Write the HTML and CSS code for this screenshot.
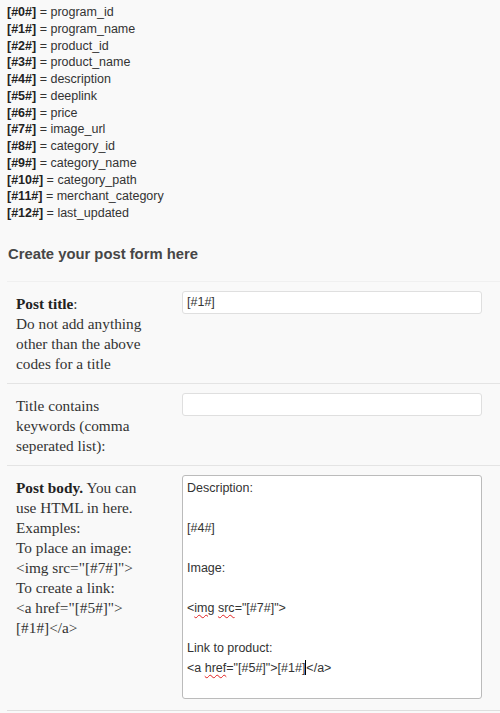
FILE: index.html
```html
<!DOCTYPE html>
<html>
<head>
<meta charset="utf-8">
<link rel="stylesheet" href="styles.css">
</head>
<body>
<div class="codes">
<div><b>[#0#]</b> = program_id</div>
<div><b>[#1#]</b> = program_name</div>
<div><b>[#2#]</b> = product_id</div>
<div><b>[#3#]</b> = product_name</div>
<div><b>[#4#]</b> = description</div>
<div><b>[#5#]</b> = deeplink</div>
<div><b>[#6#]</b> = price</div>
<div><b>[#7#]</b> = image_url</div>
<div><b>[#8#]</b> = category_id</div>
<div><b>[#9#]</b> = category_name</div>
<div><b>[#10#]</b> = category_path</div>
<div><b>[#11#]</b> = merchant_category</div>
<div><b>[#12#]</b> = last_updated</div>
</div>
<h3 class="heading">Create your post form here</h3>
<table class="form-table">
<tr class="row row-first">
<th class="label"><b>Post title</b>:<br>Do not add anything<br>other than the above<br>codes for a title</th>
<td class="field"><input class="text-input" type="text" value="[#1#]"></td>
</tr>
<tr class="row">
<th class="label">Title contains<br>keywords (comma<br>seperated list):</th>
<td class="field"><input class="text-input" type="text" value=""></td>
</tr>
<tr class="row">
<th class="label"><b>Post body.</b> You can<br>use HTML in here.<br>Examples:<br>To place an image:<br>&lt;img src="[#7#]"&gt;<br>To create a link:<br>&lt;a href="[#5#]"&gt;<br>[#1#]&lt;/a&gt;</th>
<td class="field"><div class="textarea"><div>Description:</div><div>&nbsp;</div><div>[#4#]</div><div>&nbsp;</div><div>Image:</div><div>&nbsp;</div><div>&lt;<span class="spell">img</span> <span class="spell">src</span>="[#7#]"&gt;</div><div>&nbsp;</div><div>Link to product:</div><div>&lt;a <span class="spell">href</span>="[#5#]"&gt;[#1#]<span class="caret"></span>&lt;/a&gt;</div></div></td>
</tr>
</table>
</body>
</html>
```
FILE: styles.css
```css
html, body {
  margin: 0;
  padding: 0;
  background: #f9f9f9;
}
body {
  width: 500px;
  height: 713px;
  overflow: hidden;
  font-family: "Liberation Sans", Arial, sans-serif;
  font-size: 12.5px;
  color: #333;
}
.codes {
  padding: 4px 7px 0;
  line-height: 16.75px;
}
.codes b {
  color: #222;
}
.heading {
  margin: 22px 0 0 8px;
  font-size: 14.8px;
  line-height: 20px;
  font-weight: bold;
  color: #464646;
}
.form-table {
  margin: 17px 0 0 7px;
  width: 493px;
  border-collapse: collapse;
}
.row {
  border-top: 1px solid #e4e4e4;
}
.row-first {
  border-top-color: #f0f0f0;
}
.form-table tr:last-child {
  border-bottom: 1px solid #dedede;
}
.label {
  width: 156px;
  padding: 12px 0 9px 9px;
  text-align: left;
  vertical-align: top;
  font-family: "Liberation Serif", Georgia, serif;
  font-size: 15.3px;
  line-height: 20px;
  font-weight: normal;
  color: #333;
  white-space: nowrap;
}
.label b {
  color: #222;
}
.field {
  padding: 9px 0 11px 10px;
  vertical-align: top;
}
.text-input {
  display: block;
  box-sizing: border-box;
  width: 300px;
  height: 23px;
  margin: 0;
  padding: 0 4px;
  border: 1px solid #dfdfdf;
  border-radius: 3px;
  background: #fff;
  font-family: "Liberation Sans", Arial, sans-serif;
  font-size: 12.5px;
  color: #333;
}
.textarea {
  box-sizing: border-box;
  width: 300px;
  height: 224px;
  padding: 2px 4px;
  border: 1px solid #bbb;
  border-radius: 3px;
  background: #fff;
  line-height: 20px;
  color: #333;
}
.spell {
  text-decoration: underline wavy #e02020;
  text-decoration-thickness: 1px;
  text-underline-offset: 2px;
}
.caret {
  display: inline-block;
  width: 1px;
  height: 15px;
  background: #000;
  vertical-align: -3px;
}
```
